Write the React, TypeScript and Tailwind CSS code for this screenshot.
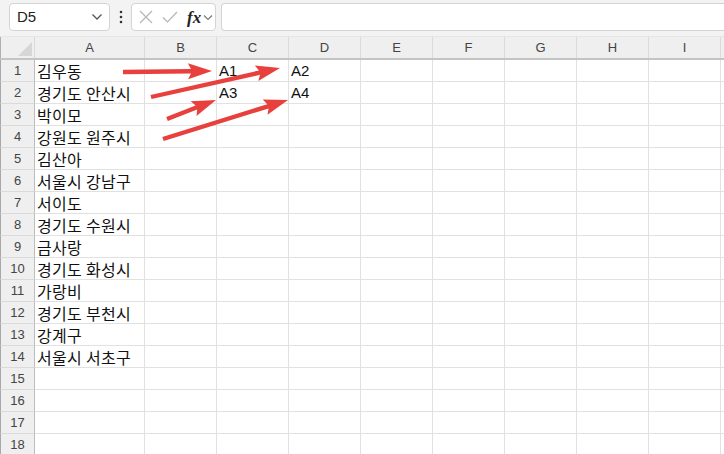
import React from "react";

const colWidths = [110, 72, 72, 72, 72, 72, 72, 72, 72, 40];
const colNames = ["A", "B", "C", "D", "E", "F", "G", "H", "I", ""];

const data: Record<number, Record<number, string>> = {
  1: { 0: "김우동", 2: "A1", 3: "A2" },
  2: { 0: "경기도 안산시", 2: "A3", 3: "A4" },
  3: { 0: "박이모" },
  4: { 0: "강원도 원주시" },
  5: { 0: "김산아" },
  6: { 0: "서울시 강남구" },
  7: { 0: "서이도" },
  8: { 0: "경기도 수원시" },
  9: { 0: "금사랑" },
  10: { 0: "경기도 화성시" },
  11: { 0: "가랑비" },
  12: { 0: "경기도 부천시" },
  13: { 0: "강계구" },
  14: { 0: "서울시 서초구" },
};

function arrowPoints(x1: number, y1: number, x2: number, y2: number) {
  const dx = x2 - x1;
  const dy = y2 - y1;
  const len = Math.sqrt(dx * dx + dy * dy);
  const ux = dx / len;
  const uy = dy / len;
  const px = -uy;
  const py = ux;
  const sw = 2.2;
  const hl = 24;
  const hw = 8;
  const notch = 3;
  const bx = x2 - ux * hl;
  const by = y2 - uy * hl;
  const nx = bx + ux * notch;
  const ny = by + uy * notch;
  const pts: [number, number][] = [
    [x1 + px * sw, y1 + py * sw],
    [nx + px * sw, ny + py * sw],
    [bx + px * hw, by + py * hw],
    [x2, y2],
    [bx - px * hw, by - py * hw],
    [nx - px * sw, ny - py * sw],
    [x1 - px * sw, y1 - py * sw],
  ];
  return pts.map((p) => `${p[0].toFixed(1)},${p[1].toFixed(1)}`).join(" ");
}

const arrows: [number, number, number, number][] = [
  [123, 72, 212, 71],
  [151, 97, 280, 68],
  [167, 119, 216, 100],
  [163, 139, 288, 100],
];

export default function App() {
  const rows = Array.from({ length: 18 }, (_, i) => i + 1);
  return (
    <div
      className="relative w-[724px] h-[454px] overflow-hidden bg-white"
      style={{ fontFamily: '"Noto Sans", "Noto Sans CJK KR", sans-serif' }}
    >
      {/* toolbar */}
      <div className="flex h-[36px] items-start bg-[#f3f3f3] pt-[3px]">
        <div className="ml-[9px] flex h-[28px] w-[101px] items-center justify-between rounded-[4px] border border-[#d4d4d4] bg-white pl-[7px] pr-[6px]">
          <span className="text-[15px] text-[#222]" style={{ fontFamily: '"Liberation Sans", sans-serif' }}>
            D5
          </span>
          <svg width="12" height="8" viewBox="0 0 12 8">
            <path d="M1.5 1.5 L6 6 L10.5 1.5" fill="none" stroke="#555" strokeWidth="1.3" />
          </svg>
        </div>
        <div className="flex h-[28px] w-[21px] items-center justify-center">
          <svg width="4" height="14" viewBox="0 0 4 14">
            <circle cx="2" cy="2" r="1.3" fill="#333" />
            <circle cx="2" cy="7" r="1.3" fill="#333" />
            <circle cx="2" cy="12" r="1.3" fill="#333" />
          </svg>
        </div>
        <div className="flex h-[28px] w-[85px] items-center rounded-[4px] border border-[#d4d4d4] bg-white">
          <svg className="ml-[7px]" width="14" height="14" viewBox="0 0 14 14">
            <path d="M1 1 L13 13 M13 1 L1 13" stroke="#b5b5b5" strokeWidth="1.2" fill="none" />
          </svg>
          <svg className="ml-[9px]" width="16" height="14" viewBox="0 0 16 14">
            <path d="M1 7.5 L5.5 12 L15 2" stroke="#b5b5b5" strokeWidth="1.2" fill="none" />
          </svg>
          <span
            className="ml-[9px] text-[17px] font-semibold italic leading-none text-[#222]"
            style={{ fontFamily: '"Liberation Serif", serif' }}
          >
            fx
          </span>
          <svg className="ml-[2px]" width="10" height="7" viewBox="0 0 10 7">
            <path d="M1 1.5 L5 5.5 L9 1.5" fill="none" stroke="#777" strokeWidth="1.1" />
          </svg>
        </div>
        <div className="ml-[5px] h-[28px] flex-1 rounded-l-[4px] border border-r-0 border-[#d4d4d4] bg-white" />
      </div>

      {/* column header row */}
      <div className="flex h-[24px] border-b-2 border-[#c4c4c4] bg-[#efefef] border-t border-t-[#e6e6e6]">
        <div className="relative w-[35px] shrink-0 border-r border-[#dadada] border-l border-l-[#b0b0b0]">
          <svg className="absolute bottom-[2px] right-[2px]" width="14" height="14" viewBox="0 0 14 14">
            <path d="M14 0 L14 14 L0 14 Z" fill="#d6d6d6" />
          </svg>
        </div>
        {colNames.map((c, i) => (
          <div
            key={i}
            className="flex shrink-0 items-center justify-center border-r border-[#dadada] text-[13px] text-[#444]"
            style={{ width: colWidths[i], fontFamily: '"Liberation Sans", sans-serif' }}
          >
            {c}
          </div>
        ))}
      </div>

      {/* rows */}
      {rows.map((r) => (
        <div key={r} className="flex h-[22px]">
          <div
            className="flex w-[35px] shrink-0 items-center justify-center border-b border-[#dadada] border-r border-r-[#bdbdbd] border-l border-l-[#a8a8a8] bg-[#efefef] text-[13px] text-[#444]"
            style={{ fontFamily: '"Liberation Sans", sans-serif' }}
          >
            {r}
          </div>
          {colWidths.map((w, i) => {
            const v = data[r]?.[i];
            const latin = v && /^[A-Z0-9]+$/.test(v);
            return (
              <div
                key={i}
                className={
                  "flex shrink-0 items-center overflow-visible whitespace-nowrap border-b border-r border-[#e1e1e1] pl-[2px] leading-none text-[#111] " +
                  (latin ? "text-[15px]" : "text-[16px] tracking-[0.3px]")
                }
                style={{
                  width: w,
                  fontFamily: latin
                    ? '"Liberation Sans", sans-serif'
                    : '"Noto Sans CJK KR", sans-serif',
                }}
              >
                {v ?? ""}
              </div>
            );
          })}
        </div>
      ))}

      {/* arrows overlay */}
      <svg className="pointer-events-none absolute left-0 top-0" width="724" height="454">
        {arrows.map((a, i) => (
          <polygon key={i} points={arrowPoints(a[0], a[1], a[2], a[3])} fill="#e8403d" />
        ))}
      </svg>
    </div>
  );
}
